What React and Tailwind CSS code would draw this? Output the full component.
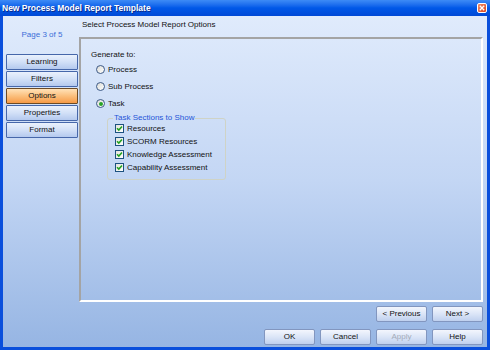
import React from "react";

const font = { fontFamily: '"Liberation Sans", Arial, sans-serif' };

function NavButton({ label, active }) {
  return (
    <div
      className={
        "h-[16px] w-[72px] flex items-center justify-center text-[8px] leading-none text-[#111] border rounded-[1px] " +
        (active
          ? "border-[#6b4a26] bg-gradient-to-b from-[#ffe2b8] via-[#fbbf7c] to-[#f69a45]"
          : "border-[#4667aa] bg-gradient-to-b from-[#eaf1fd] via-[#d2e0f7] to-[#b4c9ee]")
      }
    >
      {label}
    </div>
  );
}

function Btn({ label, disabled }) {
  return (
    <div
      className={
        "h-[16px] w-[51px] flex items-center justify-center text-[8px] leading-none border border-[#8296bf] rounded-[2px] bg-gradient-to-b from-[#f3f6fd] via-[#dbe5f7] to-[#bfd0ee] " +
        (disabled ? "text-[#a3abb9]" : "text-[#111]")
      }
    >
      {label}
    </div>
  );
}

function Radio({ label, checked }) {
  return (
    <div className="h-[17px] flex items-center">
      <div className="ml-[5px] w-[9px] h-[9px] rounded-full border border-[#3e5a86] bg-gradient-to-br from-[#dcdcd6] to-white flex items-center justify-center">
        {checked && <div className="w-[4px] h-[4px] rounded-full bg-[#27a327]" />}
      </div>
      <span className="ml-[3px] text-[8px] leading-none text-[#111]">{label}</span>
    </div>
  );
}

function Check({ label }) {
  return (
    <div className="h-[13px] flex items-center pl-[2px]">
      <div className="w-[9px] h-[9px] border border-[#1c5180] bg-gradient-to-br from-[#e3e3dc] to-white flex items-center justify-center">
        <svg width="7" height="7" viewBox="0 0 7 7">
          <path d="M1 3.2 L2.8 5 L6 1.5" stroke="#21a121" strokeWidth="1.6" fill="none" />
        </svg>
      </div>
      <span className="ml-[3px] text-[8px] leading-none text-[#111]">{label}</span>
    </div>
  );
}

export default function App() {
  return (
    <div style={font} className="w-[490px] h-[350px] flex flex-col bg-[#0a4fdc] overflow-hidden">
      {/* Title bar */}
      <div className="h-[16px] flex items-center bg-gradient-to-b from-[#3d8bf6] via-[#0058e8] to-[#0049d6] pl-[2px] pr-[3px]">
        <span className="text-white font-bold text-[8.5px] leading-none flex-1 [text-shadow:1px_1px_0_#0a2a8a]">
          New Process Model Report Template
        </span>
        <div className="w-[10px] h-[10px] rounded-[2px] border border-white bg-gradient-to-br from-[#f08a64] to-[#d8441c] flex items-center justify-center">
          <svg width="6" height="6" viewBox="0 0 6 6">
            <path d="M0.8 0.8 L5.2 5.2 M5.2 0.8 L0.8 5.2" stroke="white" strokeWidth="1.3" />
          </svg>
        </div>
      </div>

      {/* Body */}
      <div className="flex-1 flex mx-[3px] mb-[3px] bg-gradient-to-b from-[#e0ebfc] via-[#c3d6f4] to-[#96b5e3]">
        {/* Sidebar */}
        <div className="w-[76px] flex flex-col pl-[3px] pt-[13px]">
          <div className="w-[72px] h-[12px] flex items-center justify-center text-[8px] leading-none text-[#3b6ed8]">
            Page 3 of 5
          </div>
          <div className="mt-[13px] flex flex-col gap-[1px]">
            <NavButton label="Learning" />
            <NavButton label="Filters" />
            <NavButton label="Options" active />
            <NavButton label="Properties" />
            <NavButton label="Format" />
          </div>
        </div>

        {/* Main */}
        <div className="flex-1 flex flex-col pr-[4px]">
          <div className="h-[12px] mt-[3px] mb-[6px] pl-[3px] flex items-center text-[8px] leading-none text-[#111]">
            Select Process Model Report Options
          </div>
          <div className="h-[265px] border-2 border-t-[#a4a4a4] border-l-[#a4a4a4] border-r-white border-b-white pl-[10px] pt-[10px] flex flex-col">
            <div className="h-[12px] flex items-center text-[8px] leading-none text-[#111]">Generate to:</div>
            <Radio label="Process" />
            <Radio label="Sub Process" />
            <Radio label="Task" checked />
            <fieldset className="ml-[16px] w-[119px] border border-[#cfd3c6] rounded-[3px] pl-[5px] pb-[5px] m-0">
              <legend className="px-[1px] h-[12px] flex items-center text-[8px] leading-none text-[#1e55d8]">
                Task Sections to Show
              </legend>
              <div className="-mt-[2px] flex flex-col">
                <Check label="Resources" />
                <Check label="SCORM Resources" />
                <Check label="Knowledge Assessment" />
                <Check label="Capability Assessment" />
              </div>
            </fieldset>
          </div>
          <div className="mt-[4px] flex justify-end gap-[5px]">
            <Btn label="< Previous" />
            <Btn label="Next >" />
          </div>
          <div className="mt-[7px] flex justify-end gap-[5px]">
            <Btn label="OK" />
            <Btn label="Cancel" />
            <Btn label="Apply" disabled />
            <Btn label="Help" />
          </div>
        </div>
      </div>
    </div>
  );
}
